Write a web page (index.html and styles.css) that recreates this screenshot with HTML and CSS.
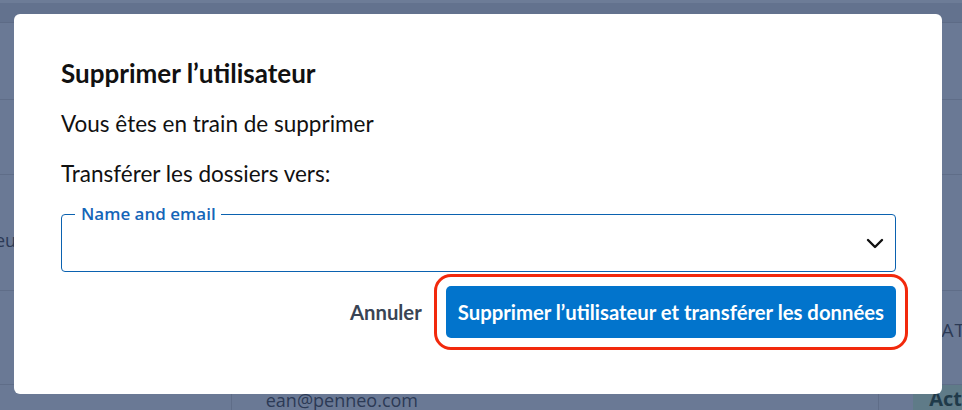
FILE: index.html
```html
<!DOCTYPE html>
<html lang="fr">
<head>
<meta charset="UTF-8" />
<meta name="viewport" content="width=device-width, initial-scale=1" />
<title>Supprimer l'utilisateur</title>
<link rel="stylesheet" href="styles.css">
</head>
<body>
  <!-- page behind the dialog, dimmed by the backdrop -->
  <div class="page">
    <div class="topbar"></div>
    <div class="thead"></div>
    <div class="row row-a"></div>
    <div class="row row-b"></div>
    <div class="row row-c"><span class="cut-left">eu</span></div>
    <div class="row row-d"><span class="cut-right">TAT</span></div>
    <div class="row row-e">
      <div class="cell cell-first"></div>
      <div class="cell cell-email">ean@penneo.com</div>
      <div class="cell cell-gap"></div>
      <div class="cell cell-status"><span>Act</span></div>
    </div>
  </div>

  <div class="modal">
    <h3 class="modal-title">Supprimer l’utilisateur</h3>
    <p class="modal-text">Vous êtes en train de supprimer</p>
    <p class="modal-text">Transférer les dossiers vers:</p>

    <div class="field">
      <span class="field-label">Name and email</span>
      <svg class="chevron" width="18" height="11" viewBox="0 0 18 11">
        <path d="M2 2 L9 9 L16 2" fill="none" stroke="#111" stroke-width="2.4" stroke-linecap="round" stroke-linejoin="round"/>
      </svg>
    </div>

    <div class="actions">
      <button class="btn-link">Annuler</button>
      <button class="btn-primary">Supprimer l’utilisateur et transférer les données</button>
    </div>
  </div>
</body>
</html>
```

FILE: styles.css
```css
body {
    margin: 0;
    font-family: Lato, "Open Sans", Arial, sans-serif;
    background-color: #6a7995;
    width: 962px;
    height: 410px;
    overflow: hidden;
    position: relative;
}
.page {
    display: flex;
    flex-direction: column;
    height: 100%;
    color: #2c3a55;
    font-family: "Open Sans", Arial, sans-serif;
}
.topbar {
    height: 5px;
    background-color: #6d7c97;
}
.thead {
    height: 27px;
    background-color: #63728e;
    border-bottom: 1px solid #5d6b86;
}
.row {
    border-bottom: 1px solid #5f6d88;
    display: flex;
    align-items: center;
    flex-shrink: 0;
}
.row-a { height: 76px; }
.row-b { height: 74px; }
.row-c { height: 115px; }
.row-d {
    height: 93px;
    justify-content: flex-end;
    align-items: flex-start;
}
.row-e {
    flex: 1;
    border-bottom: none;
    align-items: stretch;
}
.cut-left {
    font-size: 18px;
    margin-left: -5px;
    margin-top: 14px;
}
.cut-right {
    font-size: 19px;
    margin-right: -4px;
    margin-top: 26px;
    letter-spacing: 1px;
}
.cell {
    height: 100%;
}
.cell-first {
    width: 232px;
    border-right: 1px solid #5f6d88;
}
.cell-email {
    width: 650px;
    padding-left: 34px;
    box-sizing: border-box;
    font-size: 18px;
    line-height: 20px;
    padding-top: 5px;
}
.cell-gap {
    width: 34px;
    border-left: 1px solid #5f6d88;
}
.cell-status {
    flex: 1;
    background-color: #5f7b88;
    font-weight: bold;
    font-size: 20px;
    padding-left: 16px;
    color: #1f3a4a;
    line-height: 20px;
    padding-top: 4px;
}

/* dialog */
.modal {
    position: absolute;
    left: 14px;
    top: 14px;
    width: 928px;
    height: 380px;
    box-sizing: border-box;
    padding: 44px 46px 0 47px;
    background-color: #ffffff;
    border-radius: 6px;
    display: flex;
    flex-direction: column;
    color: #111111;
}
.modal-title {
    margin: 0;
    font-size: 26px;
    line-height: 30px;
    font-weight: bold;
}
.modal-text {
    margin: 23px 0 0 0;
    font-size: 22.5px;
    line-height: 26px;
}
.modal-text + .modal-text {
    margin-top: 24px;
}
.field {
    position: relative;
    margin-top: 27px;
    height: 58px;
    box-sizing: border-box;
    border: 1px solid #0b62b0;
    border-radius: 4px;
    display: flex;
    align-items: center;
    justify-content: flex-end;
    padding-right: 11px;
}
.field-label {
    position: absolute;
    top: -12px;
    left: 13px;
    padding: 0 5px 0 6px;
    background-color: #ffffff;
    font-family: "Open Sans", Arial, sans-serif;
    font-weight: 600;
    font-size: 17px;
    line-height: 22px;
    color: #1565b8;
}
.actions {
    display: flex;
    justify-content: flex-end;
    align-items: center;
    gap: 24px;
    margin-top: 14px;
}
.btn-link {
    background: none;
    border: none;
    padding: 0;
    font-family: Lato, Arial, sans-serif;
    font-weight: bold;
    font-size: 20.3px;
    color: #3a4454;
    cursor: pointer;
}
.btn-primary {
    height: 52px;
    padding: 0 12px;
    border: none;
    border-radius: 5px;
    background-color: #0274cc;
    color: #ffffff;
    font-family: Lato, Arial, sans-serif;
    font-weight: bold;
    font-size: 20.3px;
    cursor: pointer;
    /* red highlight around the button */
    outline: 3px solid #f2290c;
    outline-offset: 9px;
}
```
